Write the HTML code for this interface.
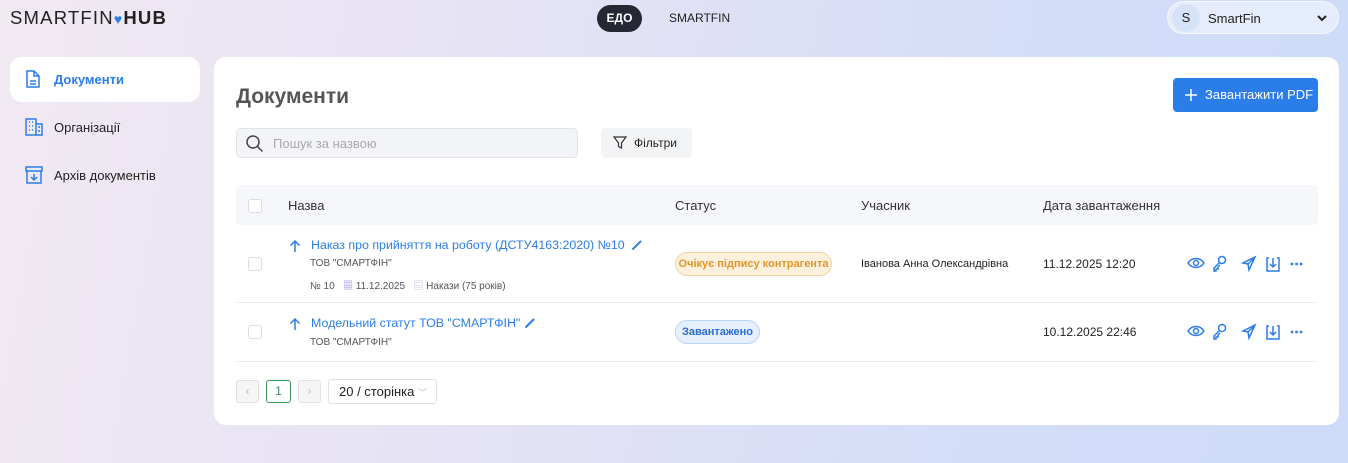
<!DOCTYPE html>
<html><head><meta charset="utf-8"><style>
*{box-sizing:border-box;margin:0;padding:0}
body{width:1348px;height:463px;overflow:hidden;font-family:"Liberation Sans","Noto Sans CJK SC",sans-serif;background:linear-gradient(100deg,#f1e9f2 0%,#e4e2f5 40%,#d3ddf8 75%,#cddbf8 100%);position:relative;color:#222}
.a{position:absolute}
.logo{left:10px;top:7px;font-size:18.5px;letter-spacing:1.2px;color:#222}
.edo{left:597px;top:5px;width:45px;height:27px;background:#232833;color:#fff;border-radius:14px;font-size:12px;font-weight:bold;text-align:center;line-height:27px}
.user{left:1167px;top:1px;width:172px;height:33px;border-radius:17px;background:rgba(255,255,255,.45);border:1px solid rgba(255,255,255,.6)}
.nav{left:10px;width:190px;height:45px;font-size:13px}
.card{left:214px;top:57px;width:1125px;height:368px;background:#fff;border-radius:12px}
.ic{stroke:#2b7de9;fill:none;stroke-width:1.5}
.th{font-size:13px;color:#333;top:198px}
.link{color:#2b7de9;font-size:12.4px}
.sub{font-size:10px;color:#555}
.cb{width:14px;height:14px;border:1px solid #ddd;border-radius:3px;background:#fff}
.sep{left:236px;width:1082px;height:1px;background:#eceef2}
</style></head><body>
<div class="a logo">SMARTFIN<span style="color:#2b7de9;font-size:14px">♥</span><b>HUB</b></div>
<div class="a edo">ЕДО</div>
<div class="a" style="left:669px;top:11px;font-size:12px">SMARTFIN</div>
<div class="a user"><div class="a" style="left:4px;top:2px;width:28px;height:28px;border-radius:50%;background:#d6e2f8;text-align:center;line-height:28px;font-size:13px">S</div><div class="a" style="left:40px;top:9px;font-size:13px">SmartFin</div><svg class="a" style="left:148px;top:11px" width="12" height="10" viewBox="0 0 12 10"><path d="M2 3l4 4 4-4" stroke="#222" stroke-width="2" fill="none"/></svg></div>

<div class="a nav" style="top:57px;background:#fff;border-radius:12px"></div>
<svg class="a" style="left:24px;top:69px" width="18" height="20" viewBox="0 0 18 20"><path class="ic" d="M3 2h7l5 5v11H3z M10 2v5h5 M6 12h6 M6 15h6"/></svg>
<div class="a" style="left:54px;top:72px;font-size:13px;font-weight:bold;color:#2b7de9">Документи</div>
<svg class="a" style="left:24px;top:117px" width="20" height="20" viewBox="0 0 20 20"><path class="ic" d="M2 2h10v16H2z M12 7h6v11h-6 M5 5h1M8 5h1M5 9h1M8 9h1M5 13h1M8 13h1M14 10h2M14 14h2"/></svg>
<div class="a" style="left:54px;top:120px;font-size:13px">Організації</div>
<svg class="a" style="left:24px;top:165px" width="20" height="20" viewBox="0 0 20 20"><path class="ic" d="M2 2h16v4H2z M3 6v12h14V6 M10 9v6 M7 12l3 3 3-3"/></svg>
<div class="a" style="left:54px;top:168px;font-size:13px">Архів документів</div>

<div class="a card"></div>
<div class="a" style="left:236px;top:85px;font-size:21px;font-weight:bold;color:#555">Документи</div>
<div class="a" style="left:1173px;top:78px;width:145px;height:34px;background:#2b7de9;border-radius:4px;color:#fff;font-size:13px;line-height:34px;padding-left:32px">Завантажити PDF</div>
<svg class="a" style="left:1185px;top:89px" width="12" height="12" viewBox="0 0 12 12"><path d="M6 0v12M0 6h12" stroke="#fff" stroke-width="1.5"/></svg>
<div class="a" style="left:236px;top:128px;width:342px;height:30px;background:#f3f4f7;border:1px solid #e2e4e8;border-radius:5px"></div>
<svg class="a" style="left:245px;top:134px" width="20" height="20" viewBox="0 0 20 20"><circle cx="8" cy="8" r="6" stroke="#444" stroke-width="1.5" fill="none"/><path d="M12.5 12.5l5 5" stroke="#444" stroke-width="1.5"/></svg>
<div class="a" style="left:273px;top:136px;font-size:13px;color:#aaa">Пошук за назвою</div>
<div class="a" style="left:601px;top:128px;width:91px;height:30px;background:#f3f4f6;border-radius:4px;font-size:12px;line-height:30px;padding-left:33px">Фільтри</div>
<svg class="a" style="left:613px;top:136px" width="14" height="14" viewBox="0 0 14 14"><path d="M1 1h12L8.5 7v5l-3-1.5V7z" stroke="#333" fill="none" stroke-width="1.2"/></svg>

<div class="a" style="left:236px;top:185px;width:1082px;height:40px;background:#f6f7fa;border-radius:4px"></div>
<div class="a cb" style="left:248px;top:199px"></div>
<div class="a th" style="left:288px">Назва</div>
<div class="a th" style="left:675px">Статус</div>
<div class="a th" style="left:861px">Учасник</div>
<div class="a th" style="left:1043px">Дата завантаження</div>

<svg class="a" style="left:289px;top:239px" width="12" height="14" viewBox="0 0 12 14"><path d="M6 13V2M1.5 6.5L6 2l4.5 4.5" stroke="#2b7de9" stroke-width="1.5" fill="none"/></svg>
<svg class="a" style="left:289px;top:317px" width="12" height="14" viewBox="0 0 12 14"><path d="M6 13V2M1.5 6.5L6 2l4.5 4.5" stroke="#2b7de9" stroke-width="1.5" fill="none"/></svg>

<div class="a cb" style="left:248px;top:257px"></div>
<div class="a link" style="left:311px;top:238px">Наказ про прийняття на роботу (ДСТУ4163:2020) №10</div>
<svg class="a" style="left:631px;top:239px" width="12" height="12" viewBox="0 0 12 12"><path d="M1.5 10.5L10 2" stroke="#2b7de9" stroke-width="2"/></svg>
<div class="a sub" style="left:310px;top:258px">ТОВ "СМАРТФІН"</div>
<div class="a sub" style="left:310px;top:277px">№ 10 &nbsp;&nbsp;<span style="color:#9a8de0">▦</span> 11.12.2025 &nbsp;&nbsp;<span style="color:#c9b8e6">▤</span> Накази (75 років)</div>
<div class="a" style="left:675px;top:252px;width:157px;height:24px;border-radius:12px;background:#fdf0dc;border:1px solid #f5d39e;color:#e5962a;font-size:11px;font-weight:bold;line-height:22px;text-align:center">Очікує підпису контрагента</div>
<div class="a" style="left:861px;top:258px;font-size:11px">Іванова Анна Олександрівна</div>
<div class="a" style="left:1043px;top:257px;font-size:12px">11.12.2025 12:20</div>
<div class="a sep" style="top:302px"></div>

<div class="a cb" style="left:248px;top:325px"></div>
<div class="a link" style="left:311px;top:316px">Модельний статут ТОВ "СМАРТФІН"</div>
<svg class="a" style="left:524px;top:317px" width="12" height="12" viewBox="0 0 12 12"><path d="M1.5 10.5L10 2" stroke="#2b7de9" stroke-width="2"/></svg>
<div class="a sub" style="left:310px;top:337px">ТОВ "СМАРТФІН"</div>
<div class="a" style="left:675px;top:320px;width:85px;height:24px;border-radius:12px;background:#e6effc;border:1px solid #b9d3f6;color:#2b6fd0;font-size:11px;font-weight:bold;line-height:22px;text-align:center">Завантажено</div>
<div class="a" style="left:1043px;top:325px;font-size:12px">10.12.2025 22:46</div>
<div class="a sep" style="top:361px"></div>

<svg class="a" style="left:1186px;top:254px" width="122" height="20" viewBox="0 0 122 20"><g class="ic" stroke-width="1.3"><path d="M2 9c4-6 12-6 16 0c-4 6-12 6-16 0z"/><circle cx="10" cy="9" r="2.5"/><circle cx="36" cy="6" r="3.5"/><path d="M33.5 8.5L28 14v3h2v-2h2v-2l2-2"/><path d="M69 3L57 9l5 1 1 6z M62 10l7-7"/><path d="M83 4h-2v13h12V4h-2 M87 4v9 M84 10l3 3 3-3"/></g><g fill="#2b7de9"><circle cx="106" cy="10" r="1.4"/><circle cx="110.5" cy="10" r="1.4"/><circle cx="115" cy="10" r="1.4"/></g></svg>
<svg class="a" style="left:1186px;top:322px" width="122" height="20" viewBox="0 0 122 20"><g class="ic" stroke-width="1.3"><path d="M2 9c4-6 12-6 16 0c-4 6-12 6-16 0z"/><circle cx="10" cy="9" r="2.5"/><circle cx="36" cy="6" r="3.5"/><path d="M33.5 8.5L28 14v3h2v-2h2v-2l2-2"/><path d="M69 3L57 9l5 1 1 6z M62 10l7-7"/><path d="M83 4h-2v13h12V4h-2 M87 4v9 M84 10l3 3 3-3"/></g><g fill="#2b7de9"><circle cx="106" cy="10" r="1.4"/><circle cx="110.5" cy="10" r="1.4"/><circle cx="115" cy="10" r="1.4"/></g></svg>

<div class="a" style="left:236px;top:380px;width:23px;height:23px;border:1px solid #e2e2e2;border-radius:3px;background:#f5f5f5;color:#bbb;font-size:12px;text-align:center;line-height:21px">‹</div>
<div class="a" style="left:266px;top:380px;width:25px;height:23px;border:1px solid #3a9a5a;border-radius:3px;color:#3a8a5a;font-size:12px;text-align:center;line-height:21px">1</div>
<div class="a" style="left:298px;top:380px;width:23px;height:23px;border:1px solid #e2e2e2;border-radius:3px;background:#f5f5f5;color:#bbb;font-size:12px;text-align:center;line-height:21px">›</div>
<div class="a" style="left:328px;top:379px;width:109px;height:25px;border:1px solid #e2e2e2;border-radius:3px;font-size:13px;line-height:23px;padding-left:10px">20 / сторінка <span style="color:#bbb;font-size:9px">﹀</span></div>
</body></html>
